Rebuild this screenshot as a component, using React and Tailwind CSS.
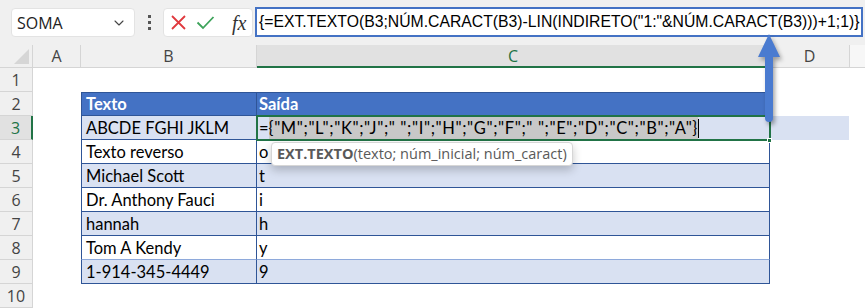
import React from 'react';
import { ChevronDown } from 'lucide-react';

const rows = [
  { n: 1 },
  { n: 2, b: 'Texto', c: 'Saída', head: true },
  { n: 3, b: 'ABCDE FGHI JKLM', band: true, active: true },
  { n: 4, b: 'Texto reverso', c: 'o' },
  { n: 5, b: 'Michael Scott', c: 't', band: true },
  { n: 6, b: 'Dr. Anthony Fauci', c: 'i' },
  { n: 7, b: 'hannah', c: 'h', band: true },
  { n: 8, b: 'Tom A Kendy', c: 'y', light: true },
  { n: 9, b: '1-914-345-4449', c: '9', band: true, last: true },
  { n: 10 },
];

const Toolbar = () => (
  <div className="h-[45px] bg-[#f0f0f0] flex items-start pt-[7px] pl-[11px] font-['Open_Sans',sans-serif]">
    <div className="w-[124px] h-[29px] mt-[1px] bg-white rounded-[4px] border border-[#e3e3e3] flex items-center justify-between pl-[5px] pr-[7px]">
      <span className="text-[16px] text-[#222]">SOMA</span>
      <ChevronDown className="w-4 h-4 text-[#444]" strokeWidth={1.6} />
    </div>
    <div className="w-[28px] h-[29px] flex flex-col items-center justify-center gap-[3px] mt-[1px]">
      <span className="w-[3px] h-[3px] bg-[#555]" />
      <span className="w-[3px] h-[3px] bg-[#555]" />
      <span className="w-[3px] h-[3px] bg-[#555]" />
    </div>
    <div className="w-[90px] h-[29px] mt-[1px] bg-white rounded-[4px] border border-[#e3e3e3] flex items-center pl-[6px] gap-[9px]">
      <svg width="17" height="17" viewBox="0 0 17 17">
        <path d="M2 2 L15 15 M15 2 L2 15" stroke="#e0393e" strokeWidth="1.8" fill="none" />
      </svg>
      <svg width="19" height="15" viewBox="0 0 19 15">
        <path d="M1.5 7.5 L7 13 L17.5 2" stroke="#3da35a" strokeWidth="1.8" fill="none" />
      </svg>
      <span className="ml-[8px] text-[20px] italic text-[#333] font-['Liberation_Serif',serif] leading-none">fx</span>
    </div>
    <div className="ml-[2px] flex-1 h-[30px] bg-white border-2 border-[#4472c4] flex items-center pl-[2px] mr-[2px] overflow-hidden">
      <span className="text-[15.75px] text-black font-['Liberation_Sans',sans-serif] whitespace-nowrap">
        {'{=EXT.TEXTO(B3;NÚM.CARACT(B3)-LIN(INDIRETO("1:"&NÚM.CARACT(B3)))+1;1)}'}
      </span>
    </div>
  </div>
);

const ColumnHeaders = () => (
  <div className="flex h-[23px] text-[16px] text-[#444] font-['Open_Sans',sans-serif]">
    <div className="w-[33px] shrink-0 bg-[#f0f0f0] border-r border-b border-[#d5d5d5] relative">
      <svg className="absolute right-[3px] bottom-[3px]" width="15" height="15" viewBox="0 0 15 15">
        <path d="M15 0 L15 15 L0 15 Z" fill="#d6d6d6" />
      </svg>
    </div>
    <div className="w-[48px] shrink-0 bg-[#f0f0f0] border-r border-b border-[#d5d5d5] flex items-center justify-center">A</div>
    <div className="w-[176px] shrink-0 bg-[#f0f0f0] border-r border-b border-[#d5d5d5] flex items-center justify-center">B</div>
    <div className="w-[513px] shrink-0 bg-[#e1e1e1] border-r border-[#d5d5d5] border-b-2 border-b-[#217346] flex items-center justify-center text-[#217346]">C</div>
    <div className="w-[80px] shrink-0 bg-[#f0f0f0] border-r border-b border-[#d5d5d5] flex items-center justify-center">D</div>
    <div className="flex-1 bg-[#f7f7f7] border-b border-[#d5d5d5]" />
  </div>
);

const Row = ({ r }) => {
  const inTable = r.n >= 2 && r.n <= 9;
  const fill = r.head ? 'bg-[#4472c4] font-bold' : r.band ? 'bg-[#d9e1f2]' : 'bg-white';
  const line = r.light ? 'border-b-[#8ea9db]' : 'border-b-[#2f5597]';
  const color = r.head ? 'text-white' : 'text-black';
  return (
    <div className="flex h-[24px] text-[16.5px] font-['Lato',sans-serif]">
      <div
        className={`w-[33px] shrink-0 border-b border-[#d5d5d5] flex items-center justify-center text-[16px] font-['Open_Sans',sans-serif] ${
          r.active ? 'bg-[#e1e1e1] text-[#217346] border-r-2 border-r-[#217346]' : 'bg-[#f0f0f0] text-[#444] border-r'
        }`}
      >
        {r.n}
      </div>
      <div className="w-[48px] shrink-0" />
      {inTable ? (
        <>
          <div className={`w-[176px] shrink-0 border-l border-r border-b border-[#2f5597] ${line} ${r.head ? 'border-t' : ''} ${fill} ${color} flex items-center pl-[4px] pt-[1px]`}>
            {r.b}
          </div>
          <div className={`w-[513px] shrink-0 border-r border-b border-[#2f5597] ${line} ${r.head ? 'border-t' : ''} ${fill} ${color} flex items-center pl-[2px] pt-[1px] whitespace-nowrap`}>
            {r.active ? (
              <>
                <span>=</span>
                <span className="bg-[#c8c8c8] tracking-[0.6px]">{'{"M";"L";"K";"J";" ";"I";"H";"G";"F";" ";"E";"D";"C";"B";"A"}'}</span>
                <span className="w-px h-[19px] bg-black" />
              </>
            ) : (
              r.c
            )}
          </div>
          <div className={`w-[79px] shrink-0 ${r.active ? 'bg-[#d9e1f2]' : ''}`} />
        </>
      ) : null}
    </div>
  );
};

export default function App() {
  return (
    <div className="relative w-[865px] h-[308px] overflow-hidden bg-white">
      <Toolbar />
      <ColumnHeaders />
      {rows.map((r) => (
        <Row key={r.n} r={r} />
      ))}

      {/* active cell C3 */}
      <div className="absolute left-[256px] top-[115px] w-[515px] h-[26px] border-2 border-[#217346] pointer-events-none" />
      <div className="absolute left-[767px] top-[138px] w-[5px] h-[5px] bg-[#217346] border border-white" />

      {/* function tooltip */}
      <div className="absolute left-[271px] top-[142px] h-[24px] px-[5px] bg-white border border-[#d6d6d6] rounded-[4px] shadow-[0_4px_10px_rgba(0,0,0,0.22)] flex items-center text-[14.5px] text-[#595959] font-['Open_Sans',sans-serif] whitespace-nowrap">
        <span className="font-bold">EXT.TEXTO</span>
        <span>(texto; núm_inicial; núm_caract)</span>
      </div>

      {/* callout arrow */}
      <svg className="absolute left-[754px] top-[32px] drop-shadow-[2px_3px_2px_rgba(0,0,0,0.35)]" width="30" height="96" viewBox="0 0 30 96">
        <path d="M15 2 L26 25 L19 25 L19 86 Q19 90 15 90 Q11 90 11 86 L11 25 L4 25 Z" fill="#4a7bd0" />
      </svg>
    </div>
  );
}
